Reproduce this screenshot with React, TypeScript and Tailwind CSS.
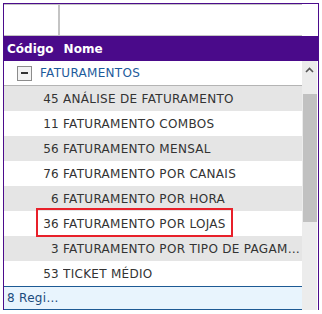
import React from "react";

const ROWS = [
  { code: "45", name: "ANÁLISE DE FATURAMENTO" },
  { code: "11", name: "FATURAMENTO COMBOS" },
  { code: "56", name: "FATURAMENTO MENSAL" },
  { code: "76", name: "FATURAMENTO POR CANAIS" },
  { code: "6", name: "FATURAMENTO POR HORA" },
  { code: "36", name: "FATURAMENTO POR LOJAS" },
  { code: "3", name: "FATURAMENTO POR TIPO DE PAGAMENTO" },
  { code: "53", name: "TICKET MÉDIO" },
];

export default function App() {
  return (
    <div
      className="relative h-[314px] w-[322px] bg-white pl-[3px] pt-[3px]"
      style={{ fontFamily: '"DejaVu Sans", sans-serif' }}
    >
      <div className="flex w-[316px] flex-col border-x border-t border-[#4b0c8c]">
        {/* filter row */}
        <div className="flex h-[32px]">
          <div className="flex w-[298px] border-y border-[#c4c4c4]">
            <div className="w-[56px] border-r-2 border-[#c4c4c4]" />
            <div className="flex-1" />
          </div>
          <div className="flex-1" />
        </div>

        {/* header */}
        <div className="flex h-[25px] items-center bg-[#4a0a8a] text-[12px] font-bold text-white">
          <span className="pl-[3px]">Código</span>
          <span className="pl-[10px]">Nome</span>
        </div>

        <div className="flex">
          <div className="flex w-[298px] flex-col">
            {/* group row */}
            <div className="flex h-[25px] items-center border-b border-[#b4b4b4]">
              <div className="ml-[13px] flex h-[15px] w-[15px] items-center justify-center border border-[#8c8c8c] bg-[#f3f3f3]">
                <div className="h-[2px] w-[7px] bg-[#333]" />
              </div>
              <span className="ml-[8px] text-[12px] tracking-[0.3px] text-[#1d5b9b]">FATURAMENTOS</span>
            </div>

            {ROWS.map((r, i) => (
              <div
                key={r.code}
                className={`flex h-[25px] items-center text-[12px] tracking-[0.3px] text-[#333] ${
                  i % 2 === 0 ? "bg-[#e5e5e5]" : "bg-white"
                }`}
              >
                <span className="w-[55px] shrink-0 text-right">{r.code}</span>
                <span className="ml-[4px] min-w-0 truncate pr-[2px]">{r.name}</span>
              </div>
            ))}

            {/* footer */}
            <div className="flex h-[24px] items-center border-y border-[#1d5a94] bg-[#e8f4fd] pl-[3px] text-[12px] tracking-[0.3px] text-[#1b4a7c]">
              8 Regi...
            </div>
          </div>

          {/* scrollbar */}
          <div className="relative w-[15px] bg-[#ececec]">
            <svg className="absolute left-[3px] top-[6px]" width="9" height="6" viewBox="0 0 9 6">
              <path d="M1 5 L4.5 1.5 L8 5" fill="none" stroke="#555" strokeWidth="1.6" />
            </svg>
            <div className="absolute left-[1px] top-[33px] h-[128px] w-[14px] bg-[#c1c1c1]" />
          </div>
        </div>
      </div>

      {/* highlight */}
      <div className="absolute left-[36px] top-[208px] h-[29px] w-[197px] border-2 border-[#e8202a]" />
    </div>
  );
}
